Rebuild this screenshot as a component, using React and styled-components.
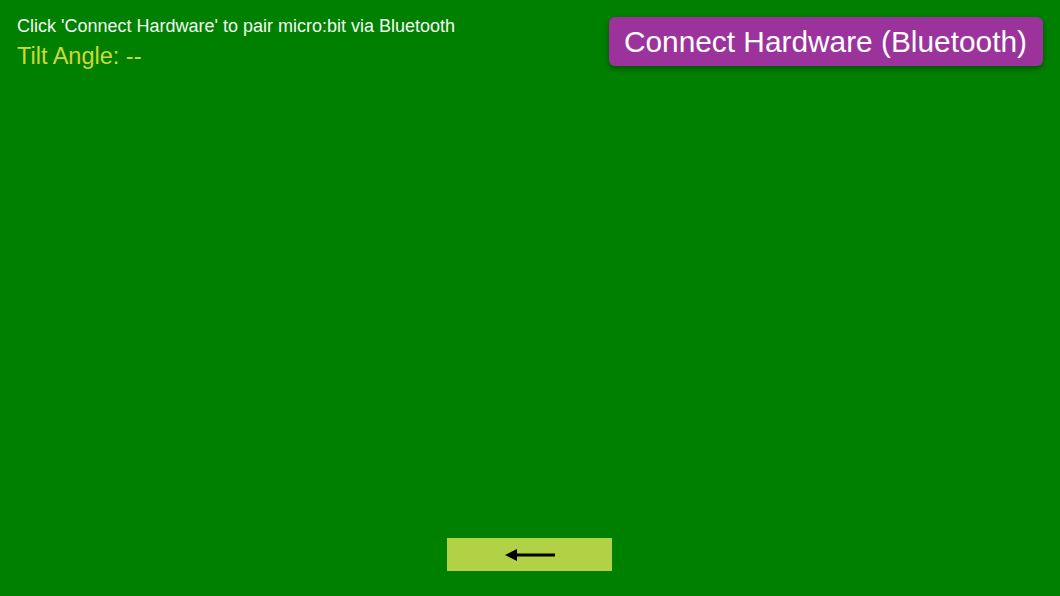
import styled, { createGlobalStyle } from "styled-components";

const GlobalStyle = createGlobalStyle`
    html, body {
        margin: 0;
        padding: 0;
        height: 100%;
    }
    body {
        background-color: #008000;
        font-family: "Liberation Sans", Arial, sans-serif;
    }
    #root {
        height: 100%;
    }
`;

const Page = styled.div`
    box-sizing: border-box;
    height: 596px;
    display: flex;
    flex-direction: column;
    padding: 16px 17px 25px 17px;
`;

const Header = styled.div`
    display: flex;
    justify-content: space-between;
    align-items: flex-start;
`;

const Status = styled.div`
    display: flex;
    flex-direction: column;
    gap: 7px;
`;

const Hint = styled.p`
    margin: 0;
    font-size: 18px;
    line-height: 20px;
    color: #f2fbf2;
`;

const Reading = styled.p`
    margin: 0;
    font-size: 23.5px;
    line-height: 27px;
    color: #cfd83a;
`;

const ConnectButton = styled.button`
    margin-top: 1px;
    height: 49px;
    padding: 0 16px 0 15px;
    border: none;
    border-radius: 6px;
    background-color: #9c339c;
    color: #ffffff;
    font-family: "Liberation Sans", Arial, sans-serif;
    font-size: 29.85px;
    box-shadow: 0 3px 6px rgba(0, 0, 0, 0.35);
    cursor: pointer;
`;

const Stage = styled.div`
    flex: 1;
`;

const Footer = styled.div`
    display: flex;
    justify-content: center;
`;

const BackButton = styled.button`
    width: 165px;
    height: 33px;
    margin-right: 1px;
    border: none;
    background-color: #b0d244;
    display: flex;
    align-items: center;
    justify-content: center;
    cursor: pointer;
    padding: 0;
`;

function ArrowLeft() {
    return (
        <svg width="50" height="12" viewBox="0 0 50 12">
            <path d="M0 6 L12 0 L12 12 Z" fill="#000" />
            <rect x="11" y="4.5" width="39" height="3" fill="#000" />
        </svg>
    );
}

function App() {
    return (
        <>
            <GlobalStyle />
            <Page>
                <Header>
                    <Status>
                        <Hint>Click 'Connect Hardware' to pair micro:bit via Bluetooth</Hint>
                        <Reading>Tilt Angle: --</Reading>
                    </Status>
                    <ConnectButton>Connect Hardware (Bluetooth)</ConnectButton>
                </Header>
                <Stage />
                <Footer>
                    <BackButton aria-label="Back">
                        <ArrowLeft />
                    </BackButton>
                </Footer>
            </Page>
        </>
    );
}

export default App;
